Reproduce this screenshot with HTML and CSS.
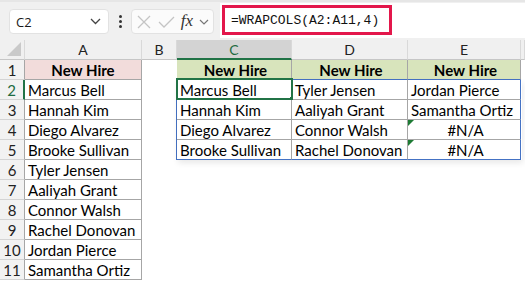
FILE: index.html
```html
<!DOCTYPE html>
<html lang="en">
<head>
    <meta charset="UTF-8">
    <meta name="viewport" content="width=device-width, initial-scale=1.0">
    <title>WRAPCOLS</title>
    <link rel="stylesheet" href="styles.css">
</head>
<body>
    <div class="toolbar">
        <div class="namebox">
            <span>C2</span>
            <svg width="11" height="7" viewBox="0 0 11 7"><path d="M1 1 L5.5 5.5 L10 1" fill="none" stroke="#444" stroke-width="1.3"/></svg>
        </div>
        <div class="dots"><i></i><i></i><i></i></div>
        <div class="fxbox">
            <svg width="16" height="14" viewBox="0 0 16 14"><path d="M2 1 L14 13 M14 1 L2 13" stroke="#c4c4c4" stroke-width="1.3" fill="none"/></svg>
            <svg width="17" height="12" viewBox="0 0 17 12"><path d="M1 6 L6 11 L16 1" stroke="#c4c4c4" stroke-width="1.3" fill="none"/></svg>
            <span class="fx">fx</span>
            <svg width="10" height="6" viewBox="0 0 10 6"><path d="M1 1 L5 5 L9 1" fill="none" stroke="#777" stroke-width="1.2"/></svg>
        </div>
        <div class="formula">
            <span class="hl">=WRAPCOLS(A2:A11,4)</span>
        </div>
    </div>

    <div class="sheet">
        <!-- soft shadow under the spilled range -->
        <div class="shade"></div>

        <!-- column headers -->
        <div class="ch corner"><svg width="14" height="14" viewBox="0 0 14 14"><path d="M14 0 L14 14 L0 14 Z" fill="#c9c9c9"/></svg></div>
        <div class="ch">A</div>
        <div class="ch">B</div>
        <div class="ch sel">C</div>
        <div class="ch">D</div>
        <div class="ch">E</div>
        <div class="ch"></div>

        <!-- row 1 -->
        <div class="rh">1</div>
        <div class="a hd">New Hire</div>
        <div class="c"></div>
        <div class="t hd">New Hire</div>
        <div class="t hd">New Hire</div>
        <div class="t hd">New Hire</div>
        <div class="c"></div>

        <!-- row 2 -->
        <div class="rh sel">2</div>
        <div class="a">Marcus Bell</div>
        <div class="c edge"></div>
        <div class="t">Marcus Bell</div>
        <div class="t">Tyler Jensen</div>
        <div class="t last">Jordan Pierce</div>
        <div class="c"></div>

        <!-- row 3 -->
        <div class="rh">3</div>
        <div class="a">Hannah Kim</div>
        <div class="c edge"></div>
        <div class="t">Hannah Kim</div>
        <div class="t">Aaliyah Grant</div>
        <div class="t last">Samantha Ortiz</div>
        <div class="c"></div>

        <!-- row 4 -->
        <div class="rh">4</div>
        <div class="a">Diego Alvarez</div>
        <div class="c edge"></div>
        <div class="t">Diego Alvarez</div>
        <div class="t">Connor Walsh</div>
        <div class="t last na"><b class="err"></b>#N/A</div>
        <div class="c"></div>

        <!-- row 5 -->
        <div class="rh">5</div>
        <div class="a">Brooke Sullivan</div>
        <div class="c edge"></div>
        <div class="t bot">Brooke Sullivan</div>
        <div class="t bot">Rachel Donovan</div>
        <div class="t bot last na"><b class="err"></b>#N/A</div>
        <div class="c"></div>

        <div class="rh">6</div>
        <div class="a">Tyler Jensen</div>
        <div class="c"></div><div class="c"></div><div class="c"></div><div class="c"></div><div class="c"></div>

        <div class="rh">7</div>
        <div class="a">Aaliyah Grant</div>
        <div class="c"></div><div class="c"></div><div class="c"></div><div class="c"></div><div class="c"></div>

        <div class="rh">8</div>
        <div class="a">Connor Walsh</div>
        <div class="c"></div><div class="c"></div><div class="c"></div><div class="c"></div><div class="c"></div>

        <div class="rh">9</div>
        <div class="a">Rachel Donovan</div>
        <div class="c"></div><div class="c"></div><div class="c"></div><div class="c"></div><div class="c"></div>

        <div class="rh">10</div>
        <div class="a">Jordan Pierce</div>
        <div class="c"></div><div class="c"></div><div class="c"></div><div class="c"></div><div class="c"></div>

        <div class="rh">11</div>
        <div class="a">Samantha Ortiz</div>
        <div class="c"></div><div class="c"></div><div class="c"></div><div class="c"></div><div class="c"></div>

        <!-- active cell C2 -->
        <div class="selbox"><span class="handle"></span></div>
    </div>
</body>
</html>
```

FILE: styles.css
```css
* {
    box-sizing: border-box;
}
body {
    margin: 0;
    font-family: Lato, "Liberation Sans", sans-serif;
    background-color: #fff;
    overflow: hidden;
}
.toolbar {
    height: 40px;
    display: flex;
    align-items: center;
    background-color: #f0f0f0;
    border-top: 2px solid #e6e6e6;
}
.namebox {
    width: 100px;
    height: 25px;
    margin-left: 9px;
    margin-top: 1px;
    padding: 0 7px 0 6px;
    display: flex;
    align-items: center;
    justify-content: space-between;
    background-color: #fff;
    border: 1px solid #e2e2e2;
    border-radius: 4px;
    font-family: "Open Sans", sans-serif;
    font-size: 13px;
    color: #1a1a1a;
}
.dots {
    width: 22px;
    display: flex;
    flex-direction: column;
    align-items: center;
    gap: 2px;
    margin-top: 1px;
}
.dots i {
    width: 3px;
    height: 3px;
    border-radius: 50%;
    background-color: #333;
}
.fxbox {
    width: 83px;
    height: 25px;
    margin-top: 1px;
    padding: 0 4px 0 4px;
    display: flex;
    align-items: center;
    justify-content: space-between;
    background-color: #fbfbfb;
    border: 1px solid #e2e2e2;
    border-radius: 4px;
}
.fx {
    font-family: "Liberation Serif", serif;
    font-style: italic;
    font-size: 17px;
    color: #333;
    margin-top: -2px;
}
.formula {
    flex: 1;
    align-self: stretch;
    margin: 1px 0 2px 6px;
    padding: 2px 0 0 2px;
    background-color: #fff;
}
.hl {
    display: inline-block;
    width: 170px;
    height: 30px;
    padding: 5px 0 0 6px;
    border: 3px solid #e3174b;
    font-family: "Liberation Mono", monospace;
    font-size: 13px;
    color: #111;
}
.sheet {
    position: relative;
    display: grid;
    grid-template-columns: 25px 117px 35px 115px 116px 113px 1fr;
    grid-auto-rows: 20px;
    font-size: 15px;
    color: #000;
}
.sheet > div {
    line-height: 20px;
    white-space: nowrap;
    overflow: hidden;
}
.sheet > .shade {
    position: absolute;
    left: 177px;
    top: 40px;
    width: 345px;
    height: 80px;
    overflow: visible;
    box-shadow: 1px 3px 6px rgba(0, 0, 0, 0.09);
}
.ch {
    background-color: #f0f0f0;
    border-right: 1px solid #d9d9d9;
    border-bottom: 1px solid #c6c6c6;
    text-align: center;
    color: #222;
    font-size: 14px;
}
.ch.sel {
    background-color: #d3d3d3;
    color: #1e6b41;
    border-bottom: 2px solid #217346;
}
.corner {
    display: flex;
    align-items: flex-end;
    justify-content: flex-end;
    padding: 0 3px 3px 0;
}
.rh {
    background-color: #f2f2f2;
    border-right: 1px solid #a6a6a6;
    border-bottom: 1px solid #d4d4d4;
    text-align: center;
    color: #222;
}
.rh.sel {
    color: #1e6b41;
    border-right: 2px solid #217346;
}
.a {
    padding-left: 3px;
    border-right: 1px solid #a6a6a6;
    border-bottom: 1px solid #a6a6a6;
}
.hd {
    font-weight: bold;
    text-align: center;
    padding-left: 0;
}
.a.hd {
    background-color: #f2dcdb;
}
.t {
    padding-left: 3px;
    background-color: #fff;
    border-right: 1px solid #a6a6a6;
    border-bottom: 1px solid #a6a6a6;
}
.t.hd {
    background-color: #d8e4bc;
    border-bottom-color: #4472c4;
}
.t.last {
    border-right-color: #4472c4;
}
.t.bot {
    border-bottom-color: #4472c4;
}
.c.edge {
    border-right: 1px solid #4472c4;
}
.na {
    position: relative;
    text-align: center;
}
.err {
    position: absolute;
    left: 0;
    top: 0;
    width: 0;
    height: 0;
    border-top: 6px solid #1e7b34;
    border-right: 6px solid transparent;
}
.selbox {
    position: absolute;
    left: 176px;
    top: 38px;
    width: 117px;
    height: 22px;
    border: 2px solid #217346;
}
.handle {
    position: absolute;
    right: -5px;
    bottom: -5px;
    width: 7px;
    height: 7px;
    background-color: #217346;
    border: 1px solid #fff;
}
```
